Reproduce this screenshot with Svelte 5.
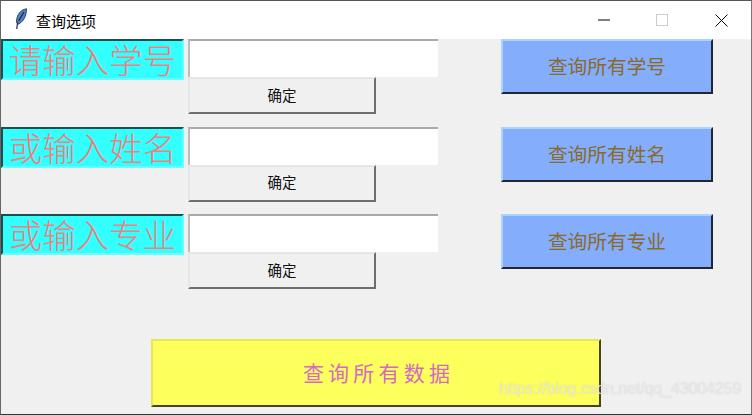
<script>
  const rows = [
    { label: '请输入学号', all: '查询所有学号' },
    { label: '或输入姓名', all: '查询所有姓名' },
    { label: '或输入专业', all: '查询所有专业' }
  ];
</script>

<div class="window">
  <header class="titlebar">
    <svg class="feather" viewBox="0 0 14 22" width="14" height="22" aria-hidden="true">
      <path d="M12.5 .8C7 1.5 2.6 6.5 2.4 14L4 16.2C9.5 14 12.5 8 12.5 .8Z" fill="#4a80cc" stroke="#2a3a52" stroke-width=".9"/>
      <path d="M10 4L4.5 13M3.5 14.5L2.8 21" fill="none" stroke="#20262f" stroke-width="1.2"/>
    </svg>
    <span class="title">查询选项</span>
    <div class="controls">
      <svg class="min" viewBox="0 0 12 2" width="12" height="2" aria-hidden="true"><path d="M0 1H12" stroke="#000" stroke-width="1"/></svg>
      <svg class="max" viewBox="0 0 12 12" width="12" height="12" aria-hidden="true"><rect x=".5" y=".5" width="11" height="11" fill="none" stroke="#ccc"/></svg>
      <svg class="close" viewBox="0 0 13 13" width="13" height="13" aria-hidden="true"><path d="M.5.5L12.5 12.5M12.5.5L.5 12.5" stroke="#000" stroke-width="1"/></svg>
    </div>
  </header>

  <main class="content">
    {#each rows as row}
      <section class="row">
        <div class="label">{row.label}</div>
        <div class="entry-group">
          <input class="entry" type="text" aria-label={row.label} />
          <button class="confirm" type="button">确定</button>
        </div>
        <button class="all" type="button">{row.all}</button>
      </section>
    {/each}
    <button class="everything" type="button">查询所有数据</button>
  </main>

  <span class="edge-mark"></span>
  <span class="watermark">https://blog.csdn.net/qq_43004259</span>
</div>

<style>
  :global(body) {
    margin: 0;
    background: #f0f0f0;
  }
  .window {
    position: relative;
    box-sizing: border-box;
    width: 752px;
    height: 415px;
    overflow: hidden;
    background: #f0f0f0;
    border-top: 1px solid #555;
    border-left: 1px solid #666;
    border-right: 1px solid #777;
    border-bottom: 1px solid #333;
    font-family: "Noto Sans CJK SC", "Liberation Sans", sans-serif;
  }
  .titlebar {
    display: flex;
    align-items: center;
    height: 38px;
    padding-left: 13px;
    background: #fff;
  }
  .feather {
    margin: 0 8px 3px 0;
  }
  .title {
    font-size: 15px;
    color: #000;
  }
  .controls {
    display: flex;
    align-items: center;
    margin-left: auto;
    margin-right: 23px;
  }
  .min {
    margin-right: 46px;
  }
  .max {
    margin-right: 47px;
  }
  .content {
    display: flex;
    flex-direction: column;
    gap: 12.5px;
  }
  .row {
    display: grid;
    grid-template-columns: 183px 250px 212px;
    column-gap: 4px;
    align-items: start;
    height: 75px;
  }
  .row .all {
    margin-left: 59px;
  }
  .label {
    box-sizing: border-box;
    height: 41px;
    font-size: 33.5px;
    font-weight: 300;
    line-height: 35px;
    text-align: center;
    color: #f07f7f;
    background: #33ffff;
    border-style: solid;
    border-width: 2px;
    border-color: #1c4f4f #66ffff #66ffff #1c4f4f;
    white-space: nowrap;
  }
  .entry-group {
    display: flex;
    flex-direction: column;
    align-items: flex-start;
  }
  .entry {
    box-sizing: border-box;
    width: 250px;
    height: 38px;
    margin: 0;
    padding: 0;
    background: #fff;
    border: 0;
    border-top: 2px solid #a9a9a9;
    border-left: 2px solid #bdbdbd;
    outline: none;
  }
  .confirm {
    box-sizing: border-box;
    width: 188px;
    height: 37px;
    margin: 0;
    padding: 0 0 3px;
    font: inherit;
    font-size: 14.5px;
    color: #111;
    background: #f0f0f0;
    border-style: solid;
    border-width: 2px;
    border-color: #e6e6e6 #6e6e6e #6e6e6e #e6e6e6;
  }
  .all {
    box-sizing: border-box;
    width: 212px;
    height: 55px;
    margin: 0;
    padding: 0 0 2px;
    font: inherit;
    font-size: 19.7px;
    color: #8a6a2a;
    background: #84adfb;
    border-style: solid;
    border-width: 2px;
    border-color: #a8d4fd #22262e #22262e #a8d4fd;
  }
  .everything {
    box-sizing: border-box;
    width: 450px;
    height: 68px;
    margin: 37.5px 0 0 150px;
    padding: 0 0 2px 5px;
    font: inherit;
    font-size: 21px;
    letter-spacing: 4.2px;
    color: #d56bc0;
    background: #fdff5c;
    border-style: solid;
    border-width: 2px;
    border-color: #e6e650 #444428 #444428 #e6e650;
  }
  .edge-mark {
    position: absolute;
    left: -1px;
    top: 282px;
    width: 1px;
    height: 34px;
    background: #7a1a1a;
  }
  .watermark {
    position: absolute;
    left: 498px;
    top: 376px;
    font-family: "Liberation Sans", sans-serif;
    font-size: 15.8px;
    line-height: 24px;
    color: rgba(255, 255, 255, 0.62);
    white-space: nowrap;
    text-shadow: 0 0 1px rgba(150, 150, 150, 0.5);
  }
</style>
